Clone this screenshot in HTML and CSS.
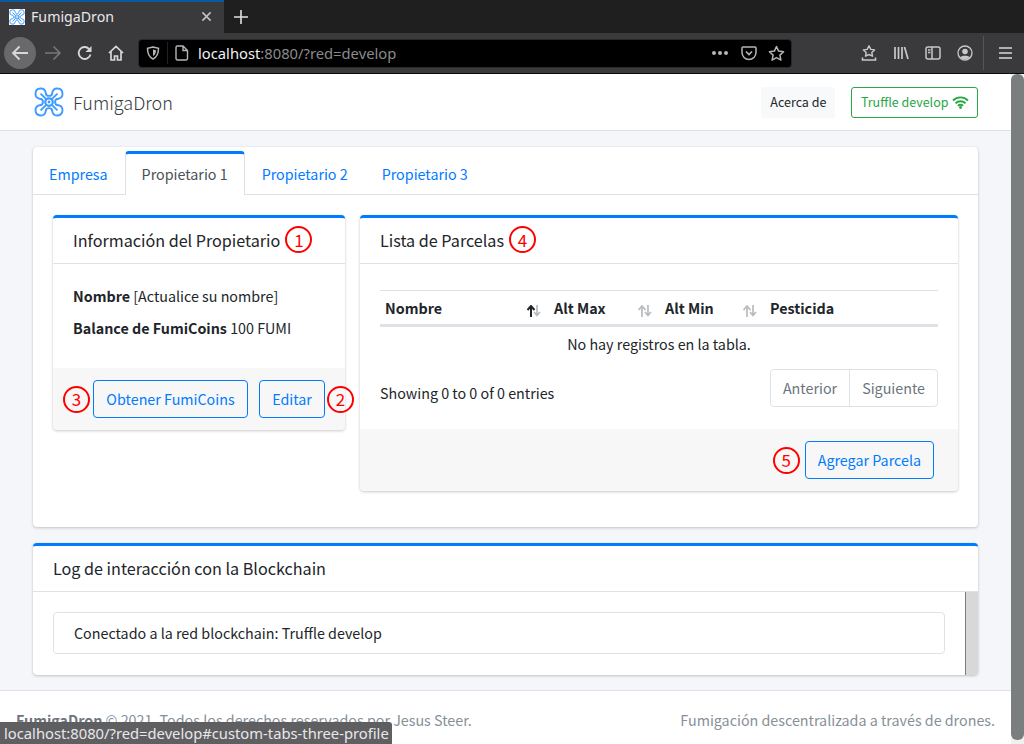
FILE: index.html
```html
<!DOCTYPE html>
<html lang="es">
<head>
    <meta charset="UTF-8">
    <title>FumigaDron</title>
    <link rel="stylesheet" href="styles.css">
</head>
<body>

    <!-- barra del navegador -->
    <div class="browser">
        <div class="tabstrip">
            <div class="browser-tab">
                <svg class="favicon" width="16" height="16" viewBox="0 0 32 32"><rect width="32" height="32" fill="#fff"/><use href="#drone"/></svg>
                <span class="browser-tab-title">FumigaDron</span>
                <svg class="tab-close" width="11" height="11" viewBox="0 0 12 12"><path d="M1.500 1.500l9 9M10.500 1.500l-9 9" stroke="#c4c4c5" stroke-width="1.600"/></svg>
            </div>
            <svg class="new-tab" width="14" height="14" viewBox="0 0 14 14"><path d="M7 0v14M0 7h14" stroke="#e2e2e3" stroke-width="1.600"/></svg>
        </div>
        <div class="toolbar">
            <div class="back-btn">
                <svg width="18" height="16" viewBox="0 0 18 16"><path d="M17 8H2M8.500 1.500L2 8l6.500 6.500" fill="none" stroke="#d8d8d9" stroke-width="1.800"/></svg>
            </div>
            <svg class="tool-icon forward" width="18" height="16" viewBox="0 0 18 16"><path d="M1 8h15M9.500 1.500L16 8l-6.500 6.500" fill="none" stroke="#77777a" stroke-width="1.600"/></svg>
            <svg class="tool-icon reload" width="16" height="16" viewBox="0 0 16 16"><path d="M13.500 9.500A6 6 0 1 1 12 3.800" fill="none" stroke="#d8d8d9" stroke-width="1.800"/><path d="M14.500 1v6h-6z" fill="#d8d8d9"/></svg>
            <svg class="tool-icon home" width="16" height="16" viewBox="0 0 16 16"><path d="M1 8l7-6.500L15 8M3 6.500V15h3.500v-4h3v4H13V6.500" fill="none" stroke="#d8d8d9" stroke-width="1.700"/></svg>
            <div class="urlbar">
                <svg class="shield" width="14" height="14" viewBox="0 0 14 14"><path d="M7 1l5.500 1.300c0 5-1 8.500-5.500 10.700C2.500 10.800 1.500 7.300 1.500 2.300z" fill="none" stroke="#b5b5b6" stroke-width="1.500"/><path d="M7 3.500l3 .7c0 2.500-.6 4.500-3 5.800z" fill="#b5b5b6"/></svg>
                <span class="url-sep"></span>
                <svg class="page-icon" width="14" height="16" viewBox="0 0 14 16"><path d="M2.500 1h5.500l4.500 4.500v8a1.500 1.500 0 0 1-1.500 1.500h-8.500a1.500 1.500 0 0 1-1.500-1.500v-11a1.500 1.500 0 0 1 1.500-1.500zM8 1v4.500h4.500" fill="none" stroke="#b5b5b6" stroke-width="1.400"/></svg>
                <span class="url-text"><span class="url-host">localhost</span>:8080/?red=develop</span>
                <span class="url-dots"><i></i><i></i><i></i></span>
                <svg class="url-pocket" width="16" height="16" viewBox="0 0 16 16"><path d="M2 2h12a1 1 0 0 1 1 1v4.500a7 7 0 0 1-14 0V3a1 1 0 0 1 1-1z" fill="none" stroke="#b5b5b6" stroke-width="1.500"/><path d="M5 6.500l3 3 3-3" fill="none" stroke="#b5b5b6" stroke-width="1.700"/></svg>
                <svg class="url-star" width="17" height="17" viewBox="0 0 17 17"><path d="M8.500 1.500l2.100 4.600 5 .6-3.700 3.400 1 5-4.400-2.500-4.400 2.500 1-5L1.400 6.700l5-.6z" fill="none" stroke="#b5b5b6" stroke-width="1.500" stroke-linejoin="round"/></svg>
            </div>
            <div class="toolbar-right">
                <svg width="16" height="16" viewBox="0 0 16 16"><path d="M8 .800l1.800 3.600 3.800.5-2.800 2.600.7 3.700L8 9.500l-3.500 1.700.7-3.700L2.400 4.900l3.800-.5z" fill="none" stroke="#c8c8c9" stroke-width="1.400" stroke-linejoin="round"/><path d="M1.500 12.500v2.500h13v-2.500" fill="none" stroke="#c8c8c9" stroke-width="1.600"/></svg>
                <svg width="16" height="16" viewBox="0 0 16 16"><path d="M2 2v12M5.500 2v12M9 2v12M11.500 2l3.500 12" fill="none" stroke="#c8c8c9" stroke-width="1.700"/></svg>
                <svg width="16" height="16" viewBox="0 0 16 16"><rect x="1" y="2" width="14" height="12" rx="2" fill="none" stroke="#c8c8c9" stroke-width="1.500"/><path d="M7 2v12M3 5h2.500M3 7.500h2.500" fill="none" stroke="#c8c8c9" stroke-width="1.500"/></svg>
                <svg width="16" height="16" viewBox="0 0 16 16"><circle cx="8" cy="8" r="7" fill="none" stroke="#c8c8c9" stroke-width="1.300"/><circle cx="8" cy="6.500" r="2.800" fill="#c8c8c9"/><path d="M3 12.500c1-2.500 9-2.500 10 0-2 2-8 2-10 0z" fill="#c8c8c9"/></svg>
                <span class="toolbar-sep"></span>
                <svg class="menu-icon" width="13" height="14" viewBox="0 0 13 14"><path d="M0 2h13M0 7h13M0 12h13" stroke="#d8d8d9" stroke-width="1.600"/></svg>
            </div>
        </div>
    </div>

    <div class="viewport">
        <div class="page">
            <nav class="navbar">
                <a class="brand">
                    <svg width="30" height="30" viewBox="0 0 32 32"><use href="#drone"/></svg>
                    <span class="brand-text">FumigaDron</span>
                </a>
                <div class="nav-actions">
                    <button class="btn-about">Acerca de</button>
                    <button class="btn-network">Truffle develop
                        <svg width="17" height="13" viewBox="0 0 17 13"><path d="M1 4.500a10.500 10.500 0 0 1 15 0M3.500 7.300a7 7 0 0 1 10 0M6 9.800a3.400 3.400 0 0 1 5 0" fill="none" stroke="#28a745" stroke-width="1.900"/><circle cx="8.500" cy="11.500" r="1.400" fill="#28a745"/></svg>
                    </button>
                </div>
            </nav>

            <main class="content">
                <section class="tabs-card">
                    <ul class="tabs">
                        <li class="tab">Empresa</li>
                        <li class="tab active">Propietario 1</li>
                        <li class="tab">Propietario 2</li>
                        <li class="tab">Propietario 3</li>
                    </ul>
                    <div class="tab-body">
                        <div class="card owner-card">
                            <div class="card-header">
                                <h3>Información del Propietario</h3>
                                <span class="step">1</span>
                            </div>
                            <div class="card-body owner-body">
                                <p><b>Nombre</b> [Actualice su nombre]</p>
                                <p><b>Balance de FumiCoins</b> 100 FUMI</p>
                            </div>
                            <div class="card-footer">
                                <span class="step">3</span>
                                <button class="btn-outline btn-coins">Obtener FumiCoins</button>
                                <button class="btn-outline btn-edit">Editar</button>
                                <span class="step">2</span>
                            </div>
                        </div>

                        <div class="card plots-card">
                            <div class="card-header">
                                <h3>Lista de Parcelas</h3>
                                <span class="step">4</span>
                            </div>
                            <div class="card-body plots-body">
                                <table class="plots-table">
                                    <thead>
                                        <tr>
                                            <th class="col-name">Nombre<svg class="sort" width="16" height="12" viewBox="0 0 16 12"><path d="M5 12V2M1.500 5L5 1l3.500 4" fill="none" stroke="#212529" stroke-width="2"/><path d="M11 0v10M8 7l3 3.500L14 7" fill="none" stroke="#b9bcbf" stroke-width="1.700"/></svg></th>
                                            <th class="col-max">Alt Max<svg class="sort" width="16" height="12" viewBox="0 0 16 12"><path d="M5 12V2M1.500 5L5 1l3.500 4" fill="none" stroke="#b9bcbf" stroke-width="1.700"/><path d="M11 0v10M8 7l3 3.500L14 7" fill="none" stroke="#b9bcbf" stroke-width="1.700"/></svg></th>
                                            <th class="col-min">Alt Min<svg class="sort" width="16" height="12" viewBox="0 0 16 12"><path d="M5 12V2M1.500 5L5 1l3.500 4" fill="none" stroke="#b9bcbf" stroke-width="1.700"/><path d="M11 0v10M8 7l3 3.500L14 7" fill="none" stroke="#b9bcbf" stroke-width="1.700"/></svg></th>
                                            <th>Pesticida</th>
                                        </tr>
                                    </thead>
                                    <tbody>
                                        <tr><td colspan="4">No hay registros en la tabla.</td></tr>
                                    </tbody>
                                </table>
                                <div class="table-info">
                                    <span class="entries">Showing 0 to 0 of 0 entries</span>
                                    <div class="pager">
                                        <span class="page-link">Anterior</span>
                                        <span class="page-link">Siguiente</span>
                                    </div>
                                </div>
                            </div>
                            <div class="card-footer plots-footer">
                                <span class="step">5</span>
                                <button class="btn-outline">Agregar Parcela</button>
                            </div>
                        </div>
                    </div>
                </section>

                <section class="card log-card">
                    <div class="card-header">
                        <h3>Log de interacción con la Blockchain</h3>
                    </div>
                    <div class="log-scroll">
                        <div class="log-list">
                            <div class="log-item">Conectado a la red blockchain: Truffle develop</div>
                        </div>
                        <div class="log-track"></div>
                    </div>
                </section>
            </main>

            <footer class="footer">
                <span><b>FumigaDron</b> © 2021. Todos los derechos reservados por Jesus Steer.</span>
                <span>Fumigación descentralizada a través de drones.</span>
            </footer>
        </div>
        <div class="page-scrollbar"><div class="page-thumb"></div></div>
    </div>

    <div class="status-link">localhost:8080/?red=develop#custom-tabs-three-profile</div>

    <!-- logo, se usa en la pestaña y en la barra -->
    <svg width="0" height="0" class="defs">
        <defs>
            <g id="drone" fill="none" stroke="#3f9bff" stroke-width="2">
                <path d="M16 9.500C14 9.500 12.500 8.500 12.500 6A5.500 5.500 0 1 0 6 12.500C8.500 12.500 9.500 14 9.500 16C9.500 18 8.500 19.500 6 19.500A5.500 5.500 0 1 0 12.500 26C12.500 23.500 14 22.500 16 22.500C18 22.500 19.500 23.500 19.500 26A5.500 5.500 0 1 0 26 19.500C23.500 19.500 22.500 18 22.500 16C22.500 14 23.500 12.500 26 12.500A5.500 5.500 0 1 0 19.500 6C19.500 8.500 18 9.500 16 9.500Z"/>
                <path d="M7 7l6 6M25 7l-6 6M7 25l6-6M25 25l-6-6"/>
                <circle cx="16" cy="16" r="4" stroke-width="2.400"/>
                <circle cx="16" cy="16" r="1.500" fill="#3f9bff" stroke="none"/>
            </g>
        </defs>
    </svg>
</body>
</html>
```

FILE: styles.css
```css
* {
    box-sizing: border-box;
}

html, body {
    margin: 0;
    height: 744px;
    overflow: hidden;
}

body {
    font-family: "Noto Sans CJK SC", "Noto Sans", sans-serif;
    font-size: 14.3px;
    line-height: 24px;
    color: #212529;
    background-color: #fff;
}

.defs {
    position: absolute;
}

/* barra del navegador */
.browser {
    height: 74px;
    font-family: "Noto Sans", sans-serif;
    background-color: #1f1f20;
    border-bottom: 1px solid #0c0c0d;
}

.tabstrip {
    height: 33px;
    display: flex;
    align-items: center;
}

.browser-tab {
    width: 224px;
    height: 33px;
    display: flex;
    align-items: center;
    padding: 0 12px 2px 9px;
    background-color: #3a3a3c;
    border-top: 2px solid #0a5aa0;
    color: #e8e8e9;
    font-size: 14.2px;
}

.browser-tab-title {
    margin-left: 6px;
    flex: 1;
}

.new-tab {
    margin-left: 10px;
}

.toolbar {
    height: 40px;
    display: flex;
    align-items: center;
    padding-left: 4px;
    background-color: #3a3a3c;
}

.back-btn {
    width: 32px;
    height: 32px;
    border-radius: 50%;
    background-color: #69696b;
    display: flex;
    align-items: center;
    justify-content: center;
}

.tool-icon {
    flex: none;
}

.forward {
    margin-left: 8px;
}

.reload {
    margin-left: 15px;
}

.home {
    margin-left: 15px;
}

.urlbar {
    width: 654px;
    height: 29px;
    margin-left: 14px;
    display: flex;
    align-items: center;
    background-color: #000;
    border: 1px solid #29292a;
    border-radius: 4px;
    font-size: 14.750px;
    color: #8a8a8c;
}

.shield {
    margin-left: 7px;
}

.url-sep {
    width: 1px;
    height: 22px;
    margin-left: 7px;
    background-color: #222;
}

.page-icon {
    margin-left: 7px;
}

.url-text {
    margin-left: 9px;
    flex: 1;
}

.url-host {
    color: #f0f0f1;
}

.url-dots {
    display: flex;
    gap: 2px;
}

.url-dots i {
    width: 4px;
    height: 4px;
    border-radius: 50%;
    background-color: #b5b5b6;
}

.url-pocket {
    margin-left: 13px;
}

.url-star {
    margin: 0 6px 0 11px;
}

.toolbar-right {
    display: flex;
    align-items: center;
    gap: 16px;
    margin-left: 69px;
    height: 34px;
}

.toolbar-sep {
    width: 1px;
    height: 34px;
    background-color: #555557;
    margin-left: -6px;
}

.menu-icon {
    margin-left: -1px;
}

/* página */
.viewport {
    height: 670px;
    display: flex;
    overflow: hidden;
}

.page {
    width: 1011px;
    flex: none;
}

.page-scrollbar {
    width: 13px;
    flex: none;
    background-color: #f0f0f0;
}

.page-thumb {
    height: 666px;
    background-color: #7b7e7e;
    border-radius: 6px;
}

.navbar {
    height: 57px;
    display: flex;
    align-items: center;
    justify-content: space-between;
    padding: 0 33px 0 34px;
    background-color: #fff;
    border-bottom: 1px solid #dee2e6;
}

.brand {
    display: flex;
    align-items: center;
    gap: 9px;
}

.brand-text {
    font-size: 18px;
    font-weight: 300;
    color: #343a40;
}

.nav-actions {
    display: flex;
    align-items: center;
    gap: 16px;
}

button {
    font: inherit;
    white-space: nowrap;
    cursor: pointer;
}

.btn-about {
    height: 31px;
    padding: 0 9px;
    font-size: 12.500px;
    color: #212529;
    background-color: #f8f9fa;
    border: none;
    border-radius: 3px;
}

.btn-network {
    height: 31px;
    padding: 0 8px 0 8.500px;
    display: flex;
    align-items: center;
    gap: 3.500px;
    font-size: 12.500px;
    color: #28a745;
    background-color: #fff;
    border: 1px solid #28a745;
    border-radius: 3px;
}

.content {
    height: 560px;
    padding: 16px 33px 0;
    background-color: #f4f6f9;
    border-bottom: 1px solid #dee2e6;
}

.tabs-card {
    height: 380px;
    background-color: #fff;
    border-radius: 4px;
    box-shadow: 0 0 1px rgba(0, 0, 0, .125), 0 1px 3px rgba(0, 0, 0, .2);
}

.tabs {
    height: 48px;
    display: flex;
    margin: 0;
    padding: 4px 0 0;
    list-style: none;
    border-bottom: 1px solid #dee2e6;
}

.tab {
    height: 44px;
    padding: 11px 17px 0;
    color: #007bff;
}

.tab:first-child {
    padding-left: 16px;
}

.tab.active {
    height: 44px;
    color: #495057;
    background-color: #fff;
    border: 1px solid #dee2e6;
    border-top: 3px solid #007bff;
    border-bottom: none;
    border-radius: 4px 4px 0 0;
    padding: 8px 16px 0;
}

.tab-body {
    display: flex;
    align-items: flex-start;
    gap: 15px;
    padding: 20px;
}

.card {
    background-color: #fff;
    border-top: 3px solid #007bff;
    border-radius: 4px;
    box-shadow: 0 0 1px rgba(0, 0, 0, .125), 0 1px 3px rgba(0, 0, 0, .2);
}

.card-header {
    height: 46px;
    display: flex;
    align-items: center;
    gap: 5px;
    padding: 0 20px 2px;
    border-bottom: 1px solid #dee2e6;
}

.card-header h3 {
    margin: 0;
    font-size: 16.150px;
    font-weight: 400;
}

.step {
    width: 27px;
    height: 27px;
    flex: none;
    display: flex;
    align-items: center;
    justify-content: center;
    font-size: 17px;
    color: #f00;
    border: 2px solid #f00;
    border-radius: 50%;
}

.card-footer {
    display: flex;
    align-items: center;
    background-color: #f7f7f7;
    border-radius: 0 0 4px 4px;
}

.btn-outline {
    height: 38px;
    flex: none;
    padding: 0 12px;
    color: #007bff;
    background-color: transparent;
    border: 1px solid #007bff;
    border-radius: 4px;
}

.owner-card {
    width: 292px;
    flex: none;
}

.owner-body {
    height: 104px;
    padding: 20px 20px 0;
}

.owner-body p {
    margin: 0 0 8px;
}

.owner-card .card-footer {
    height: 62px;
    padding: 0 0 0 10px;
    gap: 3px;
}

.btn-coins {
    width: 155px;
}

.btn-edit {
    width: 66px;
    margin: 0 -1px 0 8px;
    padding: 0;
}

.plots-card {
    width: 598px;
    flex: none;
}

.plots-body {
    height: 165px;
    padding: 26px 20px 0;
}

.plots-table {
    width: 100%;
    border-collapse: collapse;
    table-layout: fixed;
}

.plots-table th {
    position: relative;
    height: 35px;
    padding: 1px 5px 0;
    text-align: left;
    font-weight: 700;
    border-top: 1px solid #dee2e6;
    border-bottom: 3px solid #dee2e6;
}

.plots-table td {
    height: 35px;
    padding: 0;
    text-align: center;
}

.sort {
    position: absolute;
    right: 7px;
    top: 14px;
}

.col-name {
    width: 169px;
}

.col-max {
    width: 111px;
}

.col-min {
    width: 105px;
}

.table-info {
    display: flex;
    justify-content: space-between;
    align-items: flex-start;
    margin-top: 8px;
}

.entries {
    margin-top: 12px;
}

.pager {
    display: flex;
    height: 38px;
    border: 1px solid #dee2e6;
    border-radius: 4px;
    color: #6c757d;
}

.page-link {
    padding: 6px 12px;
}

.page-link + .page-link {
    border-left: 1px solid #dee2e6;
}

.plots-footer {
    height: 62px;
    justify-content: flex-end;
    gap: 5px;
    padding-right: 24px;
}

.log-card {
    height: 132px;
    margin-top: 16px;
}

.log-scroll {
    height: 83px;
    display: flex;
}

.log-list {
    flex: 1;
    padding: 20px 20px 0;
}

.log-item {
    height: 42px;
    padding: 8px 20px;
    background-color: #fff;
    border: 1px solid #dee2e6;
    border-radius: 4px;
}

.log-track {
    width: 13px;
    background-color: #d8d8d8;
    border-left: 1px solid #7b7e7e;
    border-radius: 0 0 4px 0;
}

.footer {
    height: 54px;
    display: flex;
    justify-content: space-between;
    padding: 17px 16px 0;
    color: #869099;
    background-color: #fff;
}

.footer b {
    color: #6c757d;
}

/* enlace que muestra el navegador abajo */
.status-link {
    position: absolute;
    left: 0;
    bottom: 0;
    height: 22px;
    padding: 0 3px 0 4px;
    font-size: 14.750px;
    line-height: 22px;
    color: #e8e8e9;
    background-color: #5f5f61;
    border-radius: 0 3px 0 0;
    font-family: "Noto Sans", sans-serif;
}
```
